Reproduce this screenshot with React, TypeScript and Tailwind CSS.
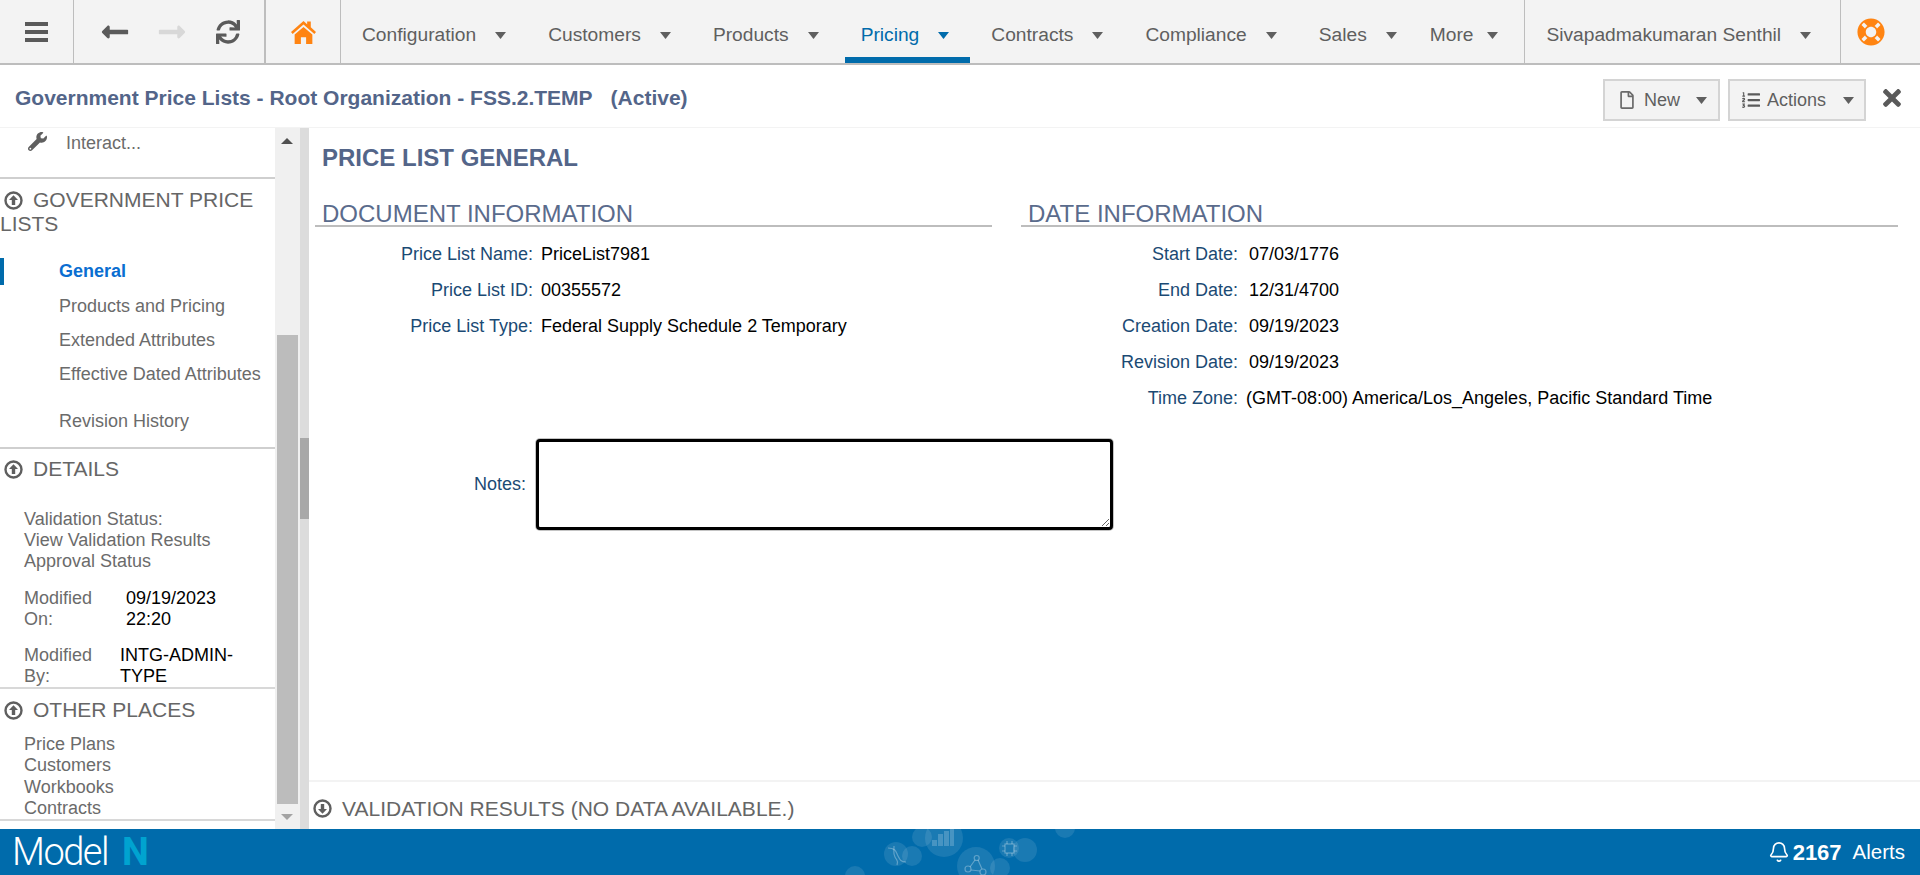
import { FaLifeRing, FaListOl, FaLongArrowAltLeft, FaLongArrowAltRight, FaRegFile, FaSync, FaTimes, FaWrench } from 'react-icons/fa';
import { Bell } from 'lucide-react';

const navItems = [
  { label: 'Configuration' },
  { label: 'Customers' },
  { label: 'Products' },
  { label: 'Pricing', active: true },
  { label: 'Contracts' },
  { label: 'Compliance' },
];

const docRows = [
  ['Price List Name:', 'PriceList7981'],
  ['Price List ID:', '00355572'],
  ['Price List Type:', 'Federal Supply Schedule 2 Temporary'],
];

const dateRows = [
  ['Start Date:', '07/03/1776'],
  ['End Date:', '12/31/4700'],
  ['Creation Date:', '09/19/2023'],
  ['Revision Date:', '09/19/2023'],
];

function Caret({ className = 'text-[#5f5f5f]' }: { className?: string }) {
  return (
    <svg width="11" height="7" viewBox="0 0 11 7" className={className}>
      <path d="M0 0h11L5.5 7z" fill="currentColor" />
    </svg>
  );
}

function CircleArrow({ down = false }: { down?: boolean }) {
  return (
    <svg width="19" height="19" viewBox="0 0 19 19" className={down ? 'rotate-180 shrink-0' : 'shrink-0'}>
      <circle cx="9.5" cy="9.5" r="8" fill="none" stroke="#5f5f5f" strokeWidth="2.4" />
      <path d="M9.5 4.2 14 9h-2.8v5H7.8V9H5z" fill="#5f5f5f" />
    </svg>
  );
}

function HomeIcon() {
  return (
    <svg width="25" height="24" viewBox="0 0 24 23" className="text-[#ff8412]">
      <path d="M0 11.5 12 1l3.5 3V1.5h3.5V7l5 4.5-1.6 1.8L12 4.2 1.6 13.3z" fill="currentColor" />
      <path d="M3.5 14 12 6.6l8.5 7.4v9H14.5v-6.5h-5V23h-6z" fill="currentColor" />
    </svg>
  );
}

function SectionHeading({ children }: { children: React.ReactNode }) {
  return (
    <div className="flex items-center gap-[10px] pl-[4px] text-[21px] leading-[24px] text-[#666]">
      <CircleArrow />
      <span>{children}</span>
    </div>
  );
}

function FormRow({ label, value, width, gap }: { label: string; value: string; width: string; gap: string }) {
  return (
    <div className="flex h-9 items-center text-[18px]">
      <div className={`${width} shrink-0 text-right text-[#1b4a74]`}>{label}</div>
      <div className={`${gap} whitespace-nowrap text-black`}>{value}</div>
    </div>
  );
}

function FooterArt() {
  return (
    <svg width="260" height="46" viewBox="840 829 260 46" className="absolute left-[840px] top-0">
      <g fill="#fff" fillOpacity="0.1">
        <circle cx="855" cy="876" r="10" />
        <circle cx="896" cy="854" r="12" />
        <circle cx="912" cy="856" r="10" />
        <circle cx="922" cy="837" r="10" />
        <circle cx="944" cy="838" r="19" />
        <circle cx="976" cy="866" r="19" />
        <circle cx="1000" cy="868" r="10" />
        <circle cx="1009" cy="848" r="10" />
        <circle cx="1025" cy="850" r="12" />
        <circle cx="1065" cy="828" r="10" />
      </g>
      <g fill="#fff" fillOpacity="0.2">
        <rect x="932" y="840" width="5" height="6" />
        <rect x="938" y="834" width="5" height="12" />
        <rect x="944" y="831" width="5" height="15" />
        <rect x="950" y="829" width="4" height="17" />
      </g>
      <g fill="none" stroke="#fff" strokeOpacity="0.3" strokeWidth="1.2">
        <path d="M888 848c8 0 8 4 10 8s3 6 8 6" />
        <path d="M894 846c0 6 -1 7 1 11s4 4 2 8" />
        <circle cx="976.7" cy="858" r="2.5" />
        <circle cx="968" cy="869" r="3" />
        <circle cx="983" cy="872" r="3" />
        <path d="M975 860l-5 7M978 860l4 9M971 870l9 1" />
        <rect x="1005" y="844" width="9" height="9" />
        <path d="M1002 846h3M1002 851h3M1014 846h3M1014 851h3M1007 841v3M1012 841v3M1007 853v3M1012 853v3" />
      </g>
    </svg>
  );
}

export default function App() {
  return (
    <main className="flex h-[875px] w-[1920px] flex-col overflow-hidden bg-white font-['Liberation_Sans',Arial,sans-serif]">
      <header className="flex h-[65px] shrink-0 border-b-2 border-[#bdbdbd] bg-[#f3f3f3] text-[19.2px] text-[#5f5f5f]">
        <div className="flex w-[74px] items-center justify-center border-r border-[#bdbdbd] pr-[1px]">
          <svg width="23" height="20" viewBox="0 0 23 20" className="text-[#5a5a5a]">
            <path d="M0 0h23v4H0zM0 8h23v4H0zM0 16h23v4H0z" fill="currentColor" />
          </svg>
        </div>
        <div className="flex w-[192px] items-center border-r-2 border-[#bdbdbd] pl-[26px]">
          <FaLongArrowAltLeft size={30} className="text-[#5a5a5a]" />
          <FaLongArrowAltRight size={30} className="ml-[27px] text-[#d8d8d8]" />
          <FaSync size={24} className="ml-[29px] text-[#5a5a5a]" />
        </div>
        <div className="flex w-[75px] items-center justify-center border-r border-[#bdbdbd]">
          <HomeIcon />
        </div>
        <nav className="flex pl-[5px]">
          {navItems.map((item) => (
            <div
              key={item.label}
              className={`mr-[5px] flex items-center gap-[19px] border-b-[6px] pl-4 pr-[21px] pt-[13px] ${
                item.active ? 'border-[#006bab] text-[#006bab]' : 'border-transparent'
              }`}
            >
              <span>{item.label}</span>
              <Caret className={item.active ? 'text-[#006bab]' : 'text-[#5f5f5f]'} />
            </div>
          ))}
          <div className="flex items-center gap-[19px] border-b-[6px] border-transparent pl-4 pr-[33px] pt-[13px]">
            <span>Sales</span>
            <Caret />
          </div>
          <div className="flex items-center gap-[14px] border-b-[6px] border-transparent pt-[13px]">
            <span>More</span>
            <Caret />
          </div>
        </nav>
        <div className="ml-[26px] flex items-center gap-[19px] border-x border-[#bdbdbd] pb-[6px] pl-[21px] pr-[29px] pt-[13px]">
          <span>Sivapadmakumaran Senthil</span>
          <Caret />
        </div>
        <div className="flex flex-1 items-center pl-[16px]">
          <FaLifeRing size={28} className="text-[#ff8412]" />
        </div>
      </header>

      <div className="flex h-[63px] shrink-0 items-center border-b border-[#f3f3f3] pl-[15px] pr-[15px]">
        <h1 className="mt-[4px] flex-1 text-[21px] font-bold text-[#536589]">
          Government Price Lists - Root Organization - FSS.2.TEMP<span className="ml-[18px]">(Active)</span>
        </h1>
        <button className="mt-[8px] flex h-[42px] w-[117px] items-center border-2 border-[#d4d4d4] bg-[#f3f3f3] pl-[13px] text-[18px] text-[#5f5f5f]">
          <FaRegFile size={18} className="text-[#6a6a6a]" />
          <span className="ml-[8px]">New</span>
          <span className="ml-[16px]"><Caret /></span>
        </button>
        <button className="ml-2 mt-[8px] flex h-[42px] w-[138px] items-center border-2 border-[#d4d4d4] bg-[#f3f3f3] pl-[12px] text-[18px] text-[#5f5f5f]">
          <FaListOl size={18} className="text-[#5a5a5a]" />
          <span className="ml-[7px]">Actions</span>
          <span className="ml-[17px]"><Caret /></span>
        </button>
        <FaTimes size={26} className="ml-[13px] mt-[4px] text-[#5a5a5a]" />
      </div>

      <div className="flex min-h-0 flex-1">
        <aside className="w-[275px] shrink-0 overflow-hidden text-[18px] leading-[21px] text-[#6b6b6b]">
          <div className="flex h-[51px] items-start border-b-2 border-[#cfcfcf] pl-[28px] pt-[3px] leading-[24px]">
            <FaWrench size={19} className="mt-[1px] text-[#5f5f5f]" />
            <span className="ml-[19px]">Interact...</span>
          </div>

          <section className="h-[270px] border-b-2 border-[#cfcfcf] pt-[9px]">
            <div className="text-[21px] leading-[24px] text-[#666]">
              <div className="flex items-center gap-[10px] pl-[4px]">
                <CircleArrow />
                <span>GOVERNMENT PRICE</span>
              </div>
              <div>LISTS</div>
            </div>
            <div className="mt-[18.5px]">
              <div className="flex h-[34.4px] items-center font-bold text-[#0a6ed1]">
                <div className="h-[27px] w-1 bg-[#006bab]" />
                <span className="ml-[55px]">General</span>
              </div>
              {['Products and Pricing', 'Extended Attributes', 'Effective Dated Attributes'].map((l) => (
                <div key={l} className="flex h-[34.4px] items-center pl-[59px]">{l}</div>
              ))}
              <div className="mt-[12.5px] flex h-[34.4px] items-center pl-[59px]">Revision History</div>
            </div>
          </section>

          <section className="h-[240px] border-b-2 border-[#d8d8d8] pt-[8px]">
            <SectionHeading>DETAILS</SectionHeading>
            <div className="mt-[28px] pl-[24px]">
              <div>Validation Status:</div>
              <div>View Validation Results</div>
              <div>Approval Status</div>
            </div>
            <div className="mt-4 flex pl-[24px]">
              <div className="w-[102px]">Modified<br />On:</div>
              <div className="text-black">09/19/2023<br />22:20</div>
            </div>
            <div className="mt-[15px] flex pl-[24px]">
              <div className="w-[96px]">Modified<br />By:</div>
              <div className="text-black">INTG-ADMIN-<br />TYPE</div>
            </div>
          </section>

          <section className="h-[132px] border-b-2 border-[#d8d8d8] pt-[9px]">
            <SectionHeading>OTHER PLACES</SectionHeading>
            <div className="mt-3 pl-[24px] leading-[21.3px]">
              <div>Price Plans</div>
              <div>Customers</div>
              <div>Workbooks</div>
              <div>Contracts</div>
            </div>
          </section>
        </aside>

        <div className="flex w-[25px] shrink-0 flex-col bg-[#f0f0f0]">
          <div className="flex h-[26px] items-center justify-center pr-[1px]">
            <svg width="12" height="6" viewBox="0 0 12 6"><path d="M6 0l6 6H0z" fill="#505050" /></svg>
          </div>
          <div className="ml-[2px] mt-[181px] h-[469px] w-[21px] bg-[#bcbcbc]" />
          <div className="flex flex-1 items-center justify-center pr-[1px]">
            <svg width="12" height="6" viewBox="0 0 12 6"><path d="M0 0h12L6 6z" fill="#a3a3a3" /></svg>
          </div>
        </div>
        <div className="w-[9px] shrink-0 bg-[#dcdcdc]">
          <div className="mt-[310px] h-[81px] bg-[#a8a8a8]" />
        </div>

        <div className="flex min-w-0 flex-1 flex-col">
          <h2 className="pl-[13px] pt-[16px] text-[24px] font-bold leading-[28px] text-[#536589]">PRICE LIST GENERAL</h2>

          <div className="mt-[29px] flex pl-[6px]">
            <div className="w-[677px]">
              <h3 className="h-[26px] border-b-2 border-[#bdbdbd] pl-[7px] text-[24px] leading-[25px] text-[#5a6b8c]">DOCUMENT INFORMATION</h3>
              <div className="mt-[9px]">
                {docRows.map(([label, value]) => (
                  <FormRow key={label} label={label} value={value} width="w-[218px]" gap="ml-[8px]" />
                ))}
              </div>
            </div>
            <div className="ml-[29px] w-[877px]">
              <h3 className="h-[26px] border-b-2 border-[#bdbdbd] pl-[7px] text-[24px] leading-[25px] text-[#5a6b8c]">DATE INFORMATION</h3>
              <div className="mt-[9px]">
                {dateRows.map(([label, value]) => (
                  <FormRow key={label} label={label} value={value} width="w-[217px]" gap="ml-[11px]" />
                ))}
                <FormRow label="Time Zone:" value="(GMT-08:00) America/Los_Angeles, Pacific Standard Time" width="w-[217px]" gap="ml-[8px]" />
              </div>
            </div>
          </div>

          <div className="mt-[23px] flex items-center pl-[6px] text-[18px]">
            <div className="w-[211px] text-right text-[#1b4a74]">Notes:</div>
            <textarea className="ml-[10px] h-[91px] w-[577px] rounded-[4px] border-[3px] border-black bg-white ring-1 ring-[#c4c4c4]" />
          </div>

          <div className="mt-auto flex h-[49px] items-center gap-[10px] border-t-2 border-[#f3f3f3] pl-[4px] pt-[6px] text-[21px] text-[#666]">
            <CircleArrow down />
            <span>VALIDATION RESULTS (NO DATA AVAILABLE.)</span>
          </div>
        </div>
      </div>

      <footer className="relative flex h-[46px] shrink-0 items-center bg-[#006bab] pl-[12px] pr-[15px] text-white">
        <FooterArt />
        <div className="font-['Roboto',sans-serif] text-[38px] font-light leading-none tracking-[-1.5px]">Model</div>
        <div className="ml-[14px] font-['Roboto',sans-serif] text-[38px] font-bold leading-none text-[#00a3d0]">N</div>
        <div className="ml-auto flex items-center text-[20.5px]">
          <Bell size={22} strokeWidth={1.8} className="mr-[1px]" />
          <span className="ml-[2px] text-[22px] font-bold">2167</span>
          <span className="ml-[11px]">Alerts</span>
        </div>
      </footer>
    </main>
  );
}
